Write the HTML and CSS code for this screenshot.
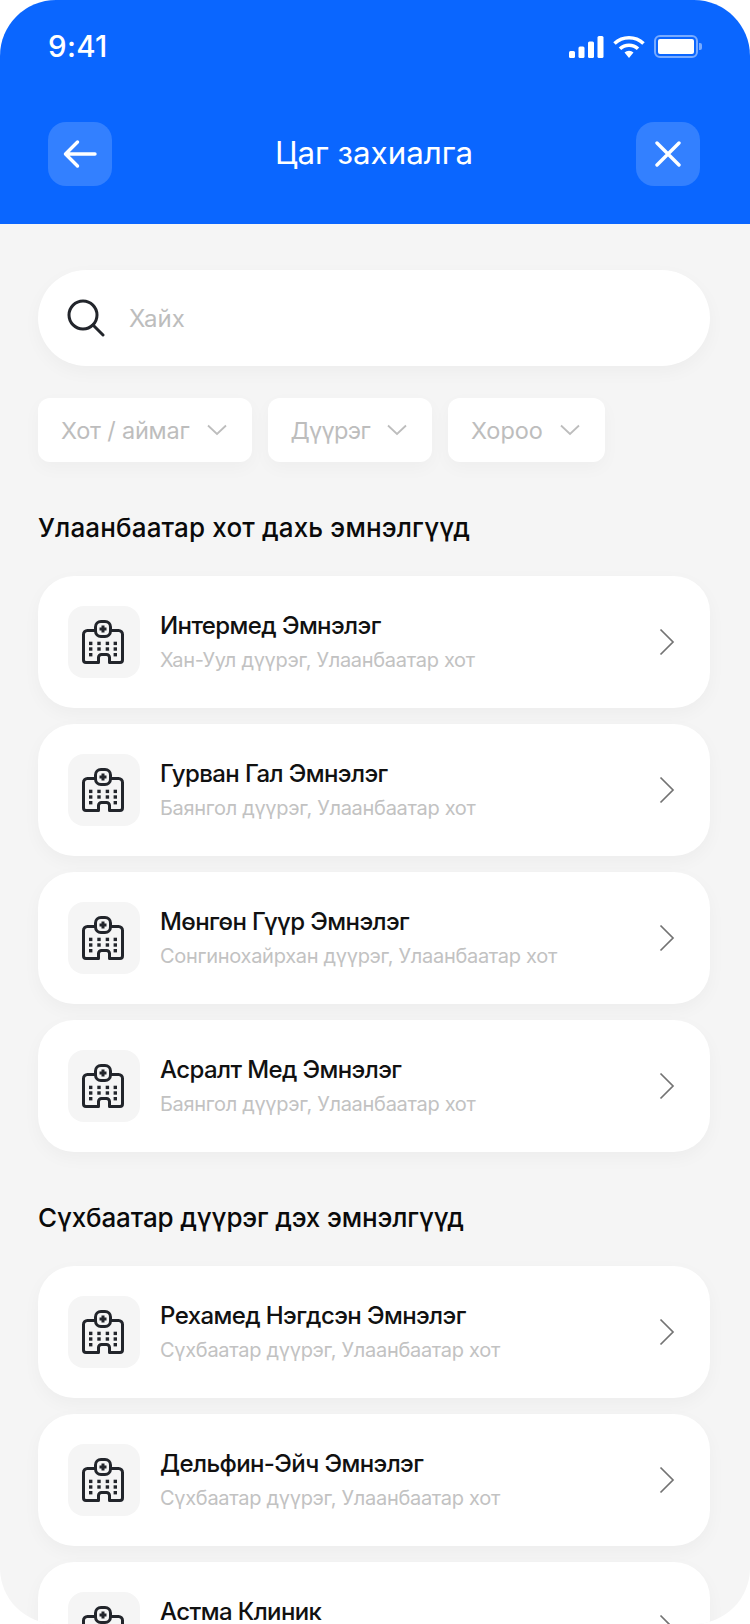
FILE: index.html
```html
<!DOCTYPE html>
<html lang="mn">
<head>
<meta charset="utf-8">
<title>Цаг захиалга</title>
<link rel="stylesheet" href="styles.css">
</head>
<body>
<svg class="defs" width="0" height="0" aria-hidden="true">
  <symbol id="hospital" viewBox="0 0 44 44">
    <path d="M13 10.500H5.500a4 4 0 0 0-4 4V40a2.500 2.500 0 0 0 2.500 2.500h12.500V37.500a3 3 0 0 1 3-3h5a3 3 0 0 1 3 3v5H38a2.500 2.500 0 0 0 2.500-2.500V14.500a4 4 0 0 0-4-4H29" fill="none" stroke="#22252b" stroke-width="3" stroke-linejoin="round"/>
    <rect x="13.500" y="1.500" width="15" height="15" rx="5.500" fill="none" stroke="#22252b" stroke-width="3"/>
    <path d="M21 5.500v7M17.500 9h7" stroke="#22252b" stroke-width="3"/>
    <g fill="#22252b">
      <rect x="7" y="21.700" width="3.400" height="3.400"/><rect x="15.300" y="21.700" width="3.400" height="3.400"/><rect x="23.700" y="21.700" width="3.400" height="3.400"/><rect x="31.600" y="21.700" width="3.400" height="3.400"/>
      <rect x="7" y="27.300" width="3.400" height="3.400"/><rect x="15.300" y="27.300" width="3.400" height="3.400"/><rect x="23.700" y="27.300" width="3.400" height="3.400"/><rect x="31.600" y="27.300" width="3.400" height="3.400"/>
      <rect x="7" y="33" width="3.400" height="3.400"/><rect x="31.600" y="33" width="3.400" height="3.400"/>
    </g>
  </symbol>
  <symbol id="chev" viewBox="0 0 16 28">
    <path d="M1.500 1.500 14 14 1.500 26.500" fill="none" stroke="#737373" stroke-width="1.700"/>
  </symbol>
  <symbol id="down" viewBox="0 0 20 12">
    <path d="M1 1.500 10 10l9-8.500" fill="none" stroke="#bdbdbd" stroke-width="1.800"/>
  </symbol>
</svg>
<div class="phone">
  <header class="top">
    <div class="status">
      <span class="time">9:41</span>
      <div class="status-icons">
        <svg class="sig" viewBox="0 0 35 22" width="35" height="22"><g fill="#fff"><rect x="0" y="15" width="6" height="7" rx="1.500"/><rect x="9.500" y="10.500" width="6" height="11.500" rx="1.500"/><rect x="19" y="5.500" width="6" height="16.500" rx="1.500"/><rect x="28.500" y="0" width="6" height="22" rx="1.500"/></g></svg>
        <svg class="wifi" viewBox="0 0 32 23" width="32" height="23"><g fill="none" stroke="#fff" stroke-width="3.600"><path d="M1.500 8.500a21 21 0 0 1 29 0"/><path d="M7 13.800a13 13 0 0 1 18 0"/></g><path d="M11.500 17.500a6.500 6.500 0 0 1 9 0L16 23z" fill="#fff"/></svg>
        <div class="batt"><div class="batt-body"><div class="batt-fill"></div></div><div class="batt-tip"></div></div>
      </div>
    </div>
    <div class="nav">
      <button class="nav-btn" type="button" aria-label="Буцах">
        <svg viewBox="0 0 34 30" width="34" height="30"><path d="M32 15H3M14.500 3 2.500 15l12 12" fill="none" stroke="#fff" stroke-width="3.400" stroke-linecap="round" stroke-linejoin="round"/></svg>
      </button>
      <h1 class="title">Цаг захиалга</h1>
      <button class="nav-btn" type="button" aria-label="Хаах">
        <svg viewBox="0 0 26 26" width="26" height="26"><path d="M2 2l22 22M24 2 2 24" fill="none" stroke="#fff" stroke-width="3.400" stroke-linecap="round"/></svg>
      </button>
    </div>
  </header>
  <main class="content">
    <div class="search">
      <svg viewBox="0 0 38 38" width="38" height="38"><circle cx="16" cy="16" r="14" fill="none" stroke="#22252b" stroke-width="3"/><path d="M26 26l10 10" stroke="#22252b" stroke-width="3" stroke-linecap="round"/></svg>
      <span class="placeholder">Хайх</span>
    </div>
    <div class="filters">
      <div class="filter"><span class="f-city">Хот / аймаг</span><svg width="20" height="12"><use href="#down"/></svg></div>
      <div class="filter"><span class="f-district">Дүүрэг</span><svg width="20" height="12"><use href="#down"/></svg></div>
      <div class="filter"><span>Хороо</span><svg width="20" height="12"><use href="#down"/></svg></div>
    </div>
    <h2 class="section">Улаанбаатар хот дахь эмнэлгүүд</h2>
    <div class="list">
      <div class="card"><div class="ico"><svg width="44" height="44"><use href="#hospital"/></svg></div><div class="txt"><div class="name">Интермед Эмнэлэг</div><div class="addr">Хан-Уул дүүрэг, Улаанбаатар хот</div></div><svg class="chev" width="16" height="28"><use href="#chev"/></svg></div>
      <div class="card"><div class="ico"><svg width="44" height="44"><use href="#hospital"/></svg></div><div class="txt"><div class="name">Гурван Гал Эмнэлэг</div><div class="addr">Баянгол дүүрэг, Улаанбаатар хот</div></div><svg class="chev" width="16" height="28"><use href="#chev"/></svg></div>
      <div class="card"><div class="ico"><svg width="44" height="44"><use href="#hospital"/></svg></div><div class="txt"><div class="name">Мөнгөн Гүүр Эмнэлэг</div><div class="addr">Сонгинохайрхан дүүрэг, Улаанбаатар хот</div></div><svg class="chev" width="16" height="28"><use href="#chev"/></svg></div>
      <div class="card"><div class="ico"><svg width="44" height="44"><use href="#hospital"/></svg></div><div class="txt"><div class="name">Асралт Мед Эмнэлэг</div><div class="addr">Баянгол дүүрэг, Улаанбаатар хот</div></div><svg class="chev" width="16" height="28"><use href="#chev"/></svg></div>
    </div>
    <h2 class="section second">Сүхбаатар дүүрэг дэх эмнэлгүүд</h2>
    <div class="list">
      <div class="card"><div class="ico"><svg width="44" height="44"><use href="#hospital"/></svg></div><div class="txt"><div class="name">Рехамед Нэгдсэн Эмнэлэг</div><div class="addr">Сүхбаатар дүүрэг, Улаанбаатар хот</div></div><svg class="chev" width="16" height="28"><use href="#chev"/></svg></div>
      <div class="card"><div class="ico"><svg width="44" height="44"><use href="#hospital"/></svg></div><div class="txt"><div class="name">Дельфин-Эйч Эмнэлэг</div><div class="addr">Сүхбаатар дүүрэг, Улаанбаатар хот</div></div><svg class="chev" width="16" height="28"><use href="#chev"/></svg></div>
      <div class="card"><div class="ico"><svg width="44" height="44"><use href="#hospital"/></svg></div><div class="txt"><div class="name">Астма Клиник</div><div class="addr">Сүхбаатар дүүрэг, Улаанбаатар хот</div></div><svg class="chev" width="16" height="28"><use href="#chev"/></svg></div>
    </div>
  </main>
</div>
</body>
</html>
```
FILE: styles.css
```css
* { box-sizing: border-box; margin: 0; padding: 0; }
html, body { width: 750px; height: 1624px; background: #fff; overflow: hidden; }
body { font-family: Inter, "Noto Sans", sans-serif; }
.defs { position: absolute; }
.phone { width: 750px; height: 1624px; border-radius: 56px; overflow: hidden; background: #f5f5f5; }
.top { height: 224px; background: #0a66ff; padding: 0 50px 0 48px; }
.status { height: 92px; padding-top: 28px; display: flex; justify-content: space-between; align-items: flex-start; }
.time { font-size: 29.5px; line-height: 36px; font-weight: 500; color: #fff; letter-spacing: 0.3px; }
.status-icons { display: flex; align-items: center; gap: 8.5px; margin-top: 7px; margin-right: -2px; }
.batt { display: flex; align-items: center; gap: 1px; margin-left: 1px; }
.batt-body { width: 44px; height: 23px; border: 2px solid rgba(255,255,255,.45); border-radius: 6px; padding: 2px; }
.batt-fill { width: 100%; height: 100%; background: #fff; border-radius: 2px; }
.batt-tip { width: 3px; height: 7px; background: rgba(255,255,255,.45); border-radius: 0 2px 2px 0; }
.nav { margin-top: 30px; display: flex; align-items: center; justify-content: space-between; }
.nav-btn { width: 64px; height: 64px; border: 0; border-radius: 18px; background: #3380ff; display: flex; align-items: center; justify-content: center; }
.title { font-size: 31.3px; line-height: 40px; font-weight: 400; color: #fff; padding-bottom: 2px; }
.content { padding: 46px 40px 0 38px; }
.search { height: 96px; border-radius: 48px; background: #fff; box-shadow: 0 6px 18px rgba(0,0,0,.035); padding-left: 29px; display: flex; align-items: center; gap: 24px; }
.placeholder { font-size: 24px; color: #bdbdbd; }
.filters { margin-top: 32px; display: flex; gap: 16px; }
.filter { height: 64px; padding: 0 25px 0 23px; border-radius: 12px; background: #fff; box-shadow: 0 6px 18px rgba(0,0,0,.03); display: flex; align-items: center; gap: 17px; font-size: 23.5px; color: #bdbdbd; }
.f-city { letter-spacing: -0.2px; }
.f-district { letter-spacing: -0.7px; }
.section { margin-top: 48px; font-size: 26px; line-height: 36px; font-weight: 500; color: #0a0a0a; letter-spacing: 0.15px; }
.section.second { letter-spacing: -0.15px; }
.list { margin-top: 30px; display: flex; flex-direction: column; gap: 16px; }
.card { height: 132px; flex: none; border-radius: 36px; background: #fff; box-shadow: 0 6px 18px rgba(0,0,0,.035); padding: 0 35px 0 30px; display: flex; align-items: center; }
.ico { width: 72px; height: 72px; border-radius: 16px; background: #f5f5f5; display: flex; align-items: center; justify-content: center; flex: none; }
.txt { flex: 1; margin-left: 20px; }
.name { font-size: 24px; line-height: 32px; font-weight: 500; color: #111; letter-spacing: -0.6px; }
.addr { margin-top: 4px; font-size: 20px; line-height: 28px; color: #c2c2c2; letter-spacing: -0.3px; }
.chev { flex: none; }
```
